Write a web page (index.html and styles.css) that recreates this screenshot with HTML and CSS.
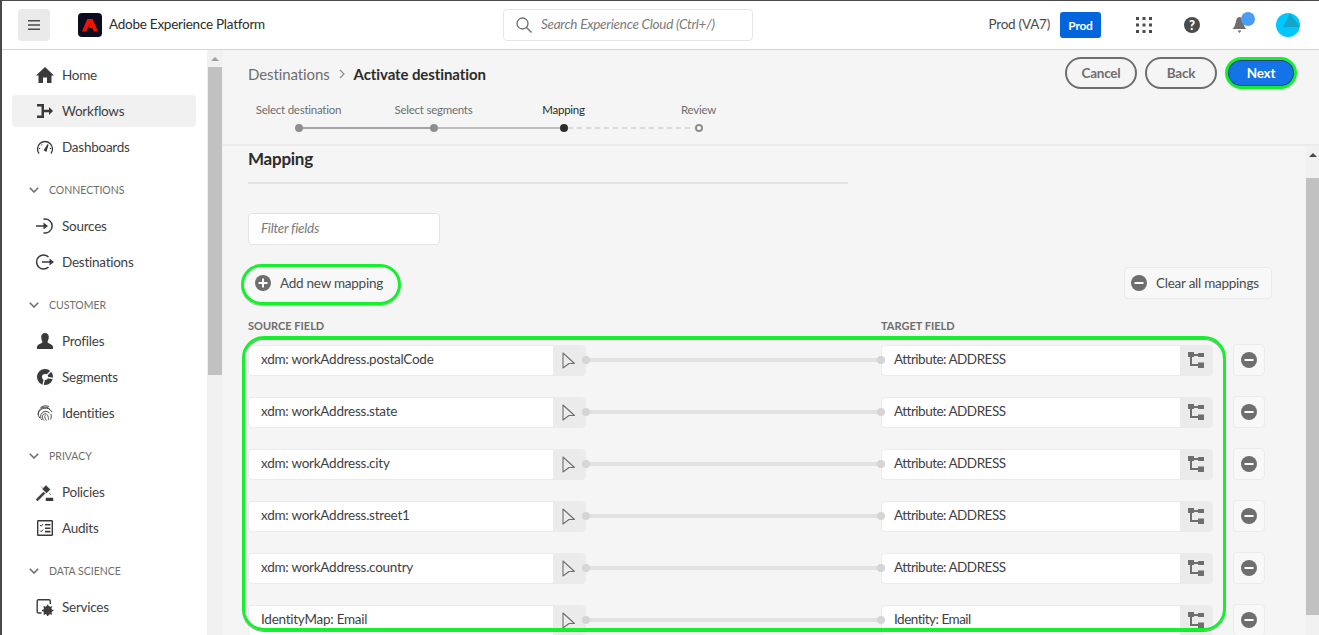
FILE: index.html
```html
<!DOCTYPE html>
<html lang="en">
<head>
    <meta charset="UTF-8">
    <meta name="viewport" content="width=device-width, initial-scale=1.0">
    <title>Adobe Experience Platform - Activate destination</title>
    <link rel="stylesheet" href="styles.css">
</head>
<body>
    <svg class="defs" width="0" height="0">
        <symbol id="i-pointer" viewBox="0 0 14 17"><path d="M1 1 12.500 11.500 7 11.500 1 16Z" fill="none" stroke="#6e6e6e" stroke-width="1.100" stroke-linejoin="round"/></symbol>
        <symbol id="i-tree" viewBox="0 0 16 16"><path d="M0 0h6v5H0zM10 1h6v4h-6zM10 10.500h6V16h-6z" fill="#6e6e6e"/><path d="M3 4v9h8M3 3h8" fill="none" stroke="#6e6e6e" stroke-width="2"/></symbol>
        <symbol id="i-minus" viewBox="0 0 16 16"><circle cx="8" cy="8" r="8" fill="#6e6e6e"/><rect x="3.500" y="7" width="9" height="2" fill="#fff"/></symbol>
    </svg>

    <header class="topbar">
        <button class="menu-btn">
            <svg width="12" height="10" viewBox="0 0 12 10"><path d="M0 0h12v1.600H0zM0 4.200h12v1.600H0zM0 8.400h12V10H0z" fill="#4b4b4b"/></svg>
        </button>
        <svg class="logo" width="24" height="24" viewBox="0 0 24 24">
            <rect width="24" height="24" rx="4" fill="#0c0c20"/>
            <path d="M9.300 6h5.400L20 18.500h-4.200l-1.400-3.600h-3.900L12.700 9.600 8.100 18.500H4Z" fill="#f01400"/>
        </svg>
        <span class="product">Adobe Experience Platform</span>
        <div class="search">
            <svg width="16" height="16" viewBox="0 0 16 16"><circle cx="6.500" cy="6.500" r="5.500" fill="none" stroke="#6e6e6e" stroke-width="1.300"/><path d="M10.500 10.500 15.500 15.500" stroke="#6e6e6e" stroke-width="1.400"/></svg>
            <span>Search Experience Cloud (Ctrl+/)</span>
        </div>
        <div class="top-right">
            <span class="org">Prod (VA7)</span>
            <span class="badge">Prod</span>
            <svg class="grid-icon" width="16" height="16" viewBox="0 0 16 16" fill="#4b4b4b">
                <path d="M0 0h3v3H0zM6.500 0h3v3h-3zM13 0h3v3h-3zM0 6.500h3v3H0zM6.500 6.500h3v3h-3zM13 6.500h3v3h-3zM0 13h3v3H0zM6.500 13h3v3h-3zM13 13h3v3h-3z"/>
            </svg>
            <span class="help">?</span>
            <span class="bell">
                <svg width="15" height="16" viewBox="0 0 15 16"><path d="M7.500 0C9 0 10 1 10.500 2.500 11.500 5 11.500 9.500 14.500 12H.5C3.500 9.500 3.500 5 4.500 2.500 5 1 6 0 7.500 0ZM5.500 13.500h4L7.500 16Z" fill="#6e6e6e"/></svg>
                <i class="bell-dot"></i>
            </span>
            <svg class="avatar" width="24" height="24" viewBox="0 0 24 24"><circle cx="12" cy="12" r="12" fill="#00c8ff"/><path d="M14 0.200 23.800 14H7Z" fill="#12a5c8"/></svg>
        </div>
    </header>

    <div class="shell">
        <aside class="sidebar">
            <nav class="nav">
                <a class="nav-item"><svg width="18" height="16" viewBox="0 0 18 16"><path d="M9 0 18 8.500H15.500V16H11V10.500H7V16H2.500V8.500H0Z" fill="#3a3a3a"/></svg>Home</a>
                <a class="nav-item active"><svg width="16" height="14" viewBox="0 0 16 14"><path d="M0 0h7v14H0v-2.500h4.500v-9H0zM7 5.800h5V3l4 4-4 4V8.200H7z" fill="#3a3a3a"/></svg>Workflows</a>
                <a class="nav-item"><svg width="17" height="15" viewBox="0 0 17 15"><path d="M2.500 13.500A7.500 7.500 0 1 1 14.500 13.500" fill="none" stroke="#3a3a3a" stroke-width="1.300"/><path d="M8 10 11.500 4.500 9.500 11ZM3 8v1M14 8v1M5 4.500l.5.500" stroke="#3a3a3a" stroke-width="1.300" fill="#3a3a3a"/></svg>Dashboards</a>

                <div class="nav-section"><svg width="10" height="6" viewBox="0 0 10 6"><path d="M.8.800 5 5 9.200.800" fill="none" stroke="#6e6e6e" stroke-width="1.600"/></svg>CONNECTIONS</div>
                <a class="nav-item"><svg width="18" height="16" viewBox="0 0 18 16"><path d="M7.500 1.200A7 7 0 1 1 7.500 14.800" fill="none" stroke="#3a3a3a" stroke-width="1.500"/><path d="M0 7.200h7.500V4.500L12 8l-4.500 3.500V8.800H0z" fill="#3a3a3a"/></svg>Sources</a>
                <a class="nav-item"><svg width="18" height="16" viewBox="0 0 18 16"><path d="M12.500 3A7 7 0 1 0 12.500 13" fill="none" stroke="#3a3a3a" stroke-width="1.500"/><path d="M6 7.200h7.500V4.500L18 8l-4.500 3.500V8.800H6z" fill="#3a3a3a"/></svg>Destinations</a>

                <div class="nav-section"><svg width="10" height="6" viewBox="0 0 10 6"><path d="M.8.800 5 5 9.200.800" fill="none" stroke="#6e6e6e" stroke-width="1.600"/></svg>CUSTOMER</div>
                <a class="nav-item"><svg width="16" height="16" viewBox="0 0 16 16"><path d="M8 0c2.500 0 3.800 1.800 3.800 4S10.800 8 10.500 9c0 1.500 5.500 2 5.500 5v2H0v-2c0-3 5.500-3.500 5.500-5C5.200 8 4.200 6.200 4.200 4S5.500 0 8 0Z" fill="#3a3a3a"/></svg>Profiles</a>
                <a class="nav-item"><svg width="16" height="16" viewBox="0 0 16 16"><circle cx="8" cy="8" r="5.500" fill="none" stroke="#3a3a3a" stroke-width="5"/><circle cx="8" cy="8" r="2" fill="#fff"/><path d="M8 8 15 1M8 8l8 1.500M8 8 6 16" stroke="#fff" stroke-width="1.300"/></svg>Segments</a>
                <a class="nav-item"><svg width="16" height="16" viewBox="0 0 16 16" fill="none" stroke="#3a3a3a" stroke-width=".9"><path d="M1 10a7.500 7.500 0 0 1 14-3M2.800 13A6 6 0 0 1 13 4.500M5 15A5 5 0 0 1 12.500 8M7 15.500c-2-2-2.500-6 1-6.800 2.500 0 3.500 3 3.500 6M9.500 15.500C8 13.500 7 10.500 8.500 10.500M14 9c.5 2 .3 4-.5 5.500M3.500 2.500A8 8 0 0 1 12 1.500"/></svg>Identities</a>

                <div class="nav-section"><svg width="10" height="6" viewBox="0 0 10 6"><path d="M.8.800 5 5 9.200.800" fill="none" stroke="#6e6e6e" stroke-width="1.600"/></svg>PRIVACY</div>
                <a class="nav-item"><svg width="18" height="17" viewBox="0 0 18 17"><path d="M0 15.500 7.500 8l1.500 1.500L1.500 17ZM6.500 5 10 1.500l4 4L10.500 9ZM10 14h7v3h-7zM5 2.500l2 2M13 9l2 2" fill="#3a3a3a" stroke="#3a3a3a" stroke-width=".5"/></svg>Policies</a>
                <a class="nav-item"><svg width="16" height="16" viewBox="0 0 16 16"><rect x=".7" y=".7" width="14.600" height="14.600" rx=".5" fill="none" stroke="#3a3a3a" stroke-width="1.400"/><path d="M3 5l1.200 1.200L6 4M3 10.500l1.200 1.200 1.800-2.200" fill="none" stroke="#3a3a3a"/><path d="M8 4h5.500v1.600H8zM8 7.500h5.500v1.600H8zM8 10.800h5.500v1.600H8z" fill="#3a3a3a"/></svg>Audits</a>

                <div class="nav-section"><svg width="10" height="6" viewBox="0 0 10 6"><path d="M.8.800 5 5 9.200.800" fill="none" stroke="#6e6e6e" stroke-width="1.600"/></svg>DATA SCIENCE</div>
                <a class="nav-item"><svg width="17" height="17" viewBox="0 0 17 17"><path d="M5 14H2a1.300 1.300 0 0 1-1.300-1.300V2A1.300 1.300 0 0 1 2 .700h10.500A1.300 1.300 0 0 1 13.800 2v3" fill="none" stroke="#3a3a3a" stroke-width="1.400"/><circle cx="11.200" cy="11.500" r="3.300" fill="none" stroke="#3a3a3a" stroke-width="2.200"/><path d="M11.200 5.800v11.400M5.500 11.500h11.400M7.200 7.500l8 8M15.200 7.500l-8 8" stroke="#3a3a3a" stroke-width="1.500"/></svg>Services</a>
            </nav>
            <div class="scrollbar side-scroll">
                <i class="arrow"></i>
                <i class="thumb"></i>
            </div>
        </aside>

        <main class="content">
            <section class="head">
                <div class="head-top">
                    <div class="crumbs">
                        <span class="crumb">Destinations</span>
                        <svg width="6" height="10" viewBox="0 0 6 10"><path d="M1 1l4 4-4 4" fill="none" stroke="#8e8e8e" stroke-width="1.200"/></svg>
                        <strong>Activate destination</strong>
                    </div>
                    <div class="actions">
                        <button class="pill">Cancel</button>
                        <button class="pill">Back</button>
                        <button class="pill pill-primary">Next</button>
                    </div>
                </div>
                <ol class="stepper">
                    <li class="step done">Select destination<i></i></li>
                    <li class="step prev">Select segments<i></i></li>
                    <li class="step current">Mapping<i></i></li>
                    <li class="step todo">Review<i></i></li>
                </ol>
            </section>

            <div class="scroll-area">
                <section class="mapping">
                    <h2>Mapping</h2>
                    <input class="filter" type="text" placeholder="Filter fields">
                    <div class="map-actions">
                        <button class="tool-btn add-btn">
                            <svg width="16" height="16" viewBox="0 0 16 16"><circle cx="8" cy="8" r="8" fill="#6e6e6e"/><path d="M3.500 7h9v2h-9zM7 3.500h2v9H7z" fill="#fff"/></svg>
                            Add new mapping
                        </button>
                        <button class="tool-btn clear-btn">
                            <svg width="16" height="16"><use href="#i-minus"/></svg>
                            Clear all mappings
                        </button>
                    </div>
                    <div class="col-labels">
                        <span class="source-label">SOURCE FIELD</span>
                        <span>TARGET FIELD</span>
                    </div>
                    <div class="rows">
                        <div class="row">
                            <div class="field source"><span>xdm: workAddress.postalCode</span><b><svg width="14" height="17"><use href="#i-pointer"/></svg></b></div>
                            <div class="link"></div>
                            <div class="field target"><span>Attribute: ADDRESS</span><b><svg width="16" height="16"><use href="#i-tree"/></svg></b></div>
                            <button class="remove"><svg width="16" height="16"><use href="#i-minus"/></svg></button>
                        </div>
                        <div class="row">
                            <div class="field source"><span>xdm: workAddress.state</span><b><svg width="14" height="17"><use href="#i-pointer"/></svg></b></div>
                            <div class="link"></div>
                            <div class="field target"><span>Attribute: ADDRESS</span><b><svg width="16" height="16"><use href="#i-tree"/></svg></b></div>
                            <button class="remove"><svg width="16" height="16"><use href="#i-minus"/></svg></button>
                        </div>
                        <div class="row">
                            <div class="field source"><span>xdm: workAddress.city</span><b><svg width="14" height="17"><use href="#i-pointer"/></svg></b></div>
                            <div class="link"></div>
                            <div class="field target"><span>Attribute: ADDRESS</span><b><svg width="16" height="16"><use href="#i-tree"/></svg></b></div>
                            <button class="remove"><svg width="16" height="16"><use href="#i-minus"/></svg></button>
                        </div>
                        <div class="row">
                            <div class="field source"><span>xdm: workAddress.street1</span><b><svg width="14" height="17"><use href="#i-pointer"/></svg></b></div>
                            <div class="link"></div>
                            <div class="field target"><span>Attribute: ADDRESS</span><b><svg width="16" height="16"><use href="#i-tree"/></svg></b></div>
                            <button class="remove"><svg width="16" height="16"><use href="#i-minus"/></svg></button>
                        </div>
                        <div class="row">
                            <div class="field source"><span>xdm: workAddress.country</span><b><svg width="14" height="17"><use href="#i-pointer"/></svg></b></div>
                            <div class="link"></div>
                            <div class="field target"><span>Attribute: ADDRESS</span><b><svg width="16" height="16"><use href="#i-tree"/></svg></b></div>
                            <button class="remove"><svg width="16" height="16"><use href="#i-minus"/></svg></button>
                        </div>
                        <div class="row">
                            <div class="field source"><span>IdentityMap: Email</span><b><svg width="14" height="17"><use href="#i-pointer"/></svg></b></div>
                            <div class="link"></div>
                            <div class="field target"><span>Identity: Email</span><b><svg width="16" height="16"><use href="#i-tree"/></svg></b></div>
                            <button class="remove"><svg width="16" height="16"><use href="#i-minus"/></svg></button>
                        </div>
                        <div class="rows-ring"></div>
                    </div>
                </section>
                <div class="scrollbar main-scroll">
                    <i class="arrow"></i>
                    <i class="thumb"></i>
                </div>
            </div>
        </main>
    </div>
</body>
</html>
```

FILE: styles.css
```css
*, *::before, *::after {
    box-sizing: border-box;
}
html, body {
    height: 100%;
}
body {
    margin: 0;
    font-family: Lato, "Open Sans", sans-serif;
    font-size: 13.5px;
    letter-spacing: -.25px;
    color: #4b4b4b;
    background-color: #fff;
    border-top: 1px solid #4a4a4a;
    border-left: 2px solid #4a4a4a;
    overflow: hidden;
    display: flex;
    flex-direction: column;
}
button, input {
    font-family: inherit;
    letter-spacing: inherit;
    cursor: pointer;
}
.defs {
    position: absolute;
}

/* top bar */
.topbar {
    height: 49px;
    flex: none;
    display: flex;
    align-items: center;
    border-bottom: 1px solid #d5d5d5;
    padding-left: 16px;
}
.menu-btn {
    width: 32px;
    height: 32px;
    border: none;
    border-radius: 4px;
    background-color: #eaeaea;
    display: flex;
    align-items: center;
    justify-content: center;
    padding: 0;
}
.logo {
    margin-left: 28px;
}
.product {
    margin-left: 7px;
    padding-bottom: 2px;
    color: #2c2c2c;
}
.search {
    margin-left: 238px;
    width: 250px;
    height: 32px;
    border: 1px solid #e6e6e6;
    border-radius: 4px;
    display: flex;
    align-items: center;
    gap: 9px;
    padding-left: 12px;
    font-style: italic;
    color: #7a7a7a;
}
.search span {
    padding-bottom: 2px;
}
.top-right {
    margin-left: auto;
    display: flex;
    align-items: center;
    padding-right: 19px;
}
.org {
    padding-bottom: 2px;
}
.badge {
    margin-left: 10px;
    width: 41px;
    height: 26px;
    border-radius: 3px;
    background-color: #0265dc;
    color: #fff;
    font-size: 12px;
    font-weight: 700;
    display: flex;
    align-items: center;
    justify-content: center;
}
.grid-icon {
    margin-left: 35px;
}
.help {
    margin-left: 32px;
    width: 16px;
    height: 16px;
    border-radius: 50%;
    background-color: #4b4b4b;
    color: #fff;
    font-size: 13px;
    font-weight: 900;
    line-height: 16px;
    text-align: center;
}
.bell {
    margin-left: 32px;
    position: relative;
    display: flex;
}
.bell-dot {
    position: absolute;
    top: -5px;
    left: 9px;
    width: 14px;
    height: 14px;
    border-radius: 50%;
    background-color: #4b9cf5;
}
.avatar {
    margin-left: 29px;
}

/* sidebar */
.shell {
    flex: 1;
    display: flex;
    min-height: 0;
}
.sidebar {
    width: 221px;
    flex: none;
    display: flex;
    overflow: hidden;
}
.nav {
    width: 205px;
    flex: none;
    padding: 7px 11px 0 10px;
}
.nav-item {
    height: 36px;
    display: flex;
    align-items: center;
    color: #3f3f3f;
    padding-left: 24px;
    border-radius: 4px;
}
.nav-item svg {
    width: 18px;
    margin-right: 8px;
    flex: none;
}
.nav-item.active {
    height: 32px;
    margin: 2px 0;
    background-color: #f1f1f1;
}
.nav-section {
    height: 14px;
    margin: 18px 0 11px;
    display: flex;
    align-items: center;
    gap: 10px;
    padding-left: 17px;
    font-size: 10.5px;
    letter-spacing: 0;
    color: #6e6e6e;
}
.scrollbar {
    width: 16px;
    flex: none;
    background-color: #f1f1f1;
}
.scrollbar .thumb {
    display: block;
    background-color: #c1c1c1;
    margin: 0 1px;
}
.scrollbar .arrow {
    display: block;
    width: 0;
    margin: 0 auto;
    border-left: 4px solid transparent;
    border-right: 4px solid transparent;
    border-bottom: 4px solid #a0a0a0;
}
.side-scroll .arrow {
    margin-top: 7px;
}
.side-scroll .thumb {
    margin-top: 6px;
    height: 308px;
}
.main-scroll {
    width: 13px;
}
.main-scroll .arrow {
    margin-top: 7px;
    border-bottom-color: #4b4b4b;
}
.main-scroll .thumb {
    margin: 21px 0 0;
    height: 437px;
}

/* header of the content */
.content {
    flex: 1;
    min-width: 0;
    display: flex;
    flex-direction: column;
    background-color: #f5f5f5;
}
.head {
    height: 96px;
    flex: none;
    border-bottom: 2px solid #ebebeb;
    padding-top: 7px;
}
.head-top {
    display: flex;
    align-items: flex-start;
    justify-content: space-between;
    padding: 0 22px 0 25px;
}
.crumbs {
    display: flex;
    align-items: center;
    gap: 9px;
    height: 32px;
    padding-top: 1px;
    font-size: 15px;
    letter-spacing: -.1px;
}
.crumb {
    color: #6e6e6e;
}
.crumbs strong {
    color: #2c2c2c;
    font-weight: 700;
}
.actions {
    display: flex;
    gap: 8px;
}
.pill {
    width: 72px;
    height: 32px;
    border: 2px solid #6e6e6e;
    border-radius: 16px;
    background: transparent;
    color: #6e6e6e;
    font-size: 13.5px;
    font-weight: 700;
    padding: 0;
}
.pill-primary {
    background-color: #1473e6;
    border: 3px solid #14f02e;
    box-shadow: inset 0 0 0 1px #1d3f7c;
    color: #fff;
}
.stepper {
    list-style: none;
    margin: 13px 0 0 8px;
    padding: 0;
    display: flex;
}
.step {
    width: 135px;
    display: flex;
    flex-direction: column;
    align-items: center;
    font-size: 11.5px;
    line-height: 16px;
    color: #6e6e6e;
}
.step:nth-child(3) {
    width: 125px;
    color: #2c2c2c;
}
.step:nth-child(4) {
    width: 145px;
}
.step i {
    width: 8px;
    height: 8px;
    margin-top: 6px;
    border-radius: 50%;
    background-color: #8e8e8e;
    position: relative;
}
.step i::after {
    content: "";
    position: absolute;
    left: 8px;
    top: 3px;
    height: 2px;
    width: 127px;
}
.done i::after {
    background-color: #a3a3a3;
}
.prev i::after {
    width: 122px;
    background-color: #bdbdbd;
}
.current i {
    background-color: #2c2c2c;
}
.current i::after {
    background: repeating-linear-gradient(90deg, #dadada 0 5px, transparent 5px 9px);
}
.todo i {
    background-color: #fff;
    border: 2px solid #8e8e8e;
}
.todo i::after {
    display: none;
}

/* mapping */
.scroll-area {
    flex: 1;
    min-height: 0;
    display: flex;
}
.mapping {
    flex: 1;
    min-width: 0;
    padding-left: 25px;
    overflow: hidden;
}
.mapping h2 {
    width: 600px;
    height: 38px;
    margin: 0;
    padding-top: 1px;
    border-bottom: 2px solid #e3e3e3;
    font-size: 17px;
    line-height: 24px;
    font-weight: 700;
    color: #2c2c2c;
}
.filter {
    display: block;
    width: 192px;
    height: 32px;
    margin-top: 29px;
    padding: 0 12px 3px;
    border: 1px solid #e4e4e4;
    border-radius: 4px;
    background-color: #fff;
    font-size: 13.5px;
    font-style: italic;
}
.filter::placeholder {
    color: #7a7a7a;
}
.map-actions {
    display: flex;
    justify-content: space-between;
    margin-top: 22px;
    padding-right: 34px;
}
.tool-btn {
    height: 32px;
    display: flex;
    align-items: center;
    gap: 9px;
    padding: 0 11px 0 6px;
    border: 1px solid #ebebeb;
    border-radius: 4px;
    background-color: #f8f8f8;
    color: #4b4b4b;
    font-size: 13.5px;
    white-space: nowrap;
}
.add-btn {
    position: relative;
    border-color: transparent;
}
.add-btn::after {
    content: "";
    position: absolute;
    left: -8px;
    top: -4px;
    width: 160px;
    height: 41px;
    border: 3px solid #14f02e;
    border-radius: 21px;
    box-shadow: 0 1px 0 rgba(90, 90, 90, .4);
}
.clear-btn {
    width: 148px;
    padding-left: 6px;
}
.col-labels {
    display: flex;
    margin-top: 19px;
    height: 16px;
    font-size: 11px;
    font-weight: 700;
    letter-spacing: 0;
    line-height: 16px;
    color: #6e6e6e;
}
.source-label {
    width: 633px;
}
.rows {
    position: relative;
    margin-top: 10px;
}
.rows-ring {
    position: absolute;
    left: -6px;
    top: -8px;
    width: 984px;
    height: 295px;
    border: 3px solid #14f02e;
    border-radius: 22px;
    box-shadow: 0 1px 0 rgba(90, 90, 90, .6), inset 0 1px 0 rgba(90, 90, 90, .6);
}
.row {
    display: flex;
    align-items: center;
    height: 32px;
    margin-bottom: 20px;
}
.field {
    height: 31px;
    flex: none;
    display: flex;
    background-color: #fff;
    border: 1px solid #ebebeb;
    border-radius: 4px;
    overflow: hidden;
}
.field span {
    flex: 1;
    padding-left: 12px;
    line-height: 27px;
    color: #3f3f3f;
}
.field b {
    width: 32px;
    background-color: #ebebeb;
    display: flex;
    align-items: center;
    justify-content: center;
}
.source {
    width: 338px;
}
.target {
    width: 332px;
}
.target span {
    letter-spacing: -.5px;
}
.link {
    width: 295px;
    flex: none;
    height: 4px;
    background-color: #e1e1e1;
    position: relative;
}
.link::before, .link::after {
    content: "";
    position: absolute;
    top: -2px;
    width: 8px;
    height: 8px;
    border-radius: 50%;
    background-color: #d5d5d5;
}
.link::before {
    left: -4px;
}
.link::after {
    right: -4px;
}
.remove {
    width: 32px;
    height: 32px;
    margin-left: 20px;
    padding: 0 1px 0 0;
    border: 1px solid #ebebeb;
    border-radius: 4px;
    background-color: #f8f8f8;
    display: flex;
    align-items: center;
    justify-content: center;
}
```
